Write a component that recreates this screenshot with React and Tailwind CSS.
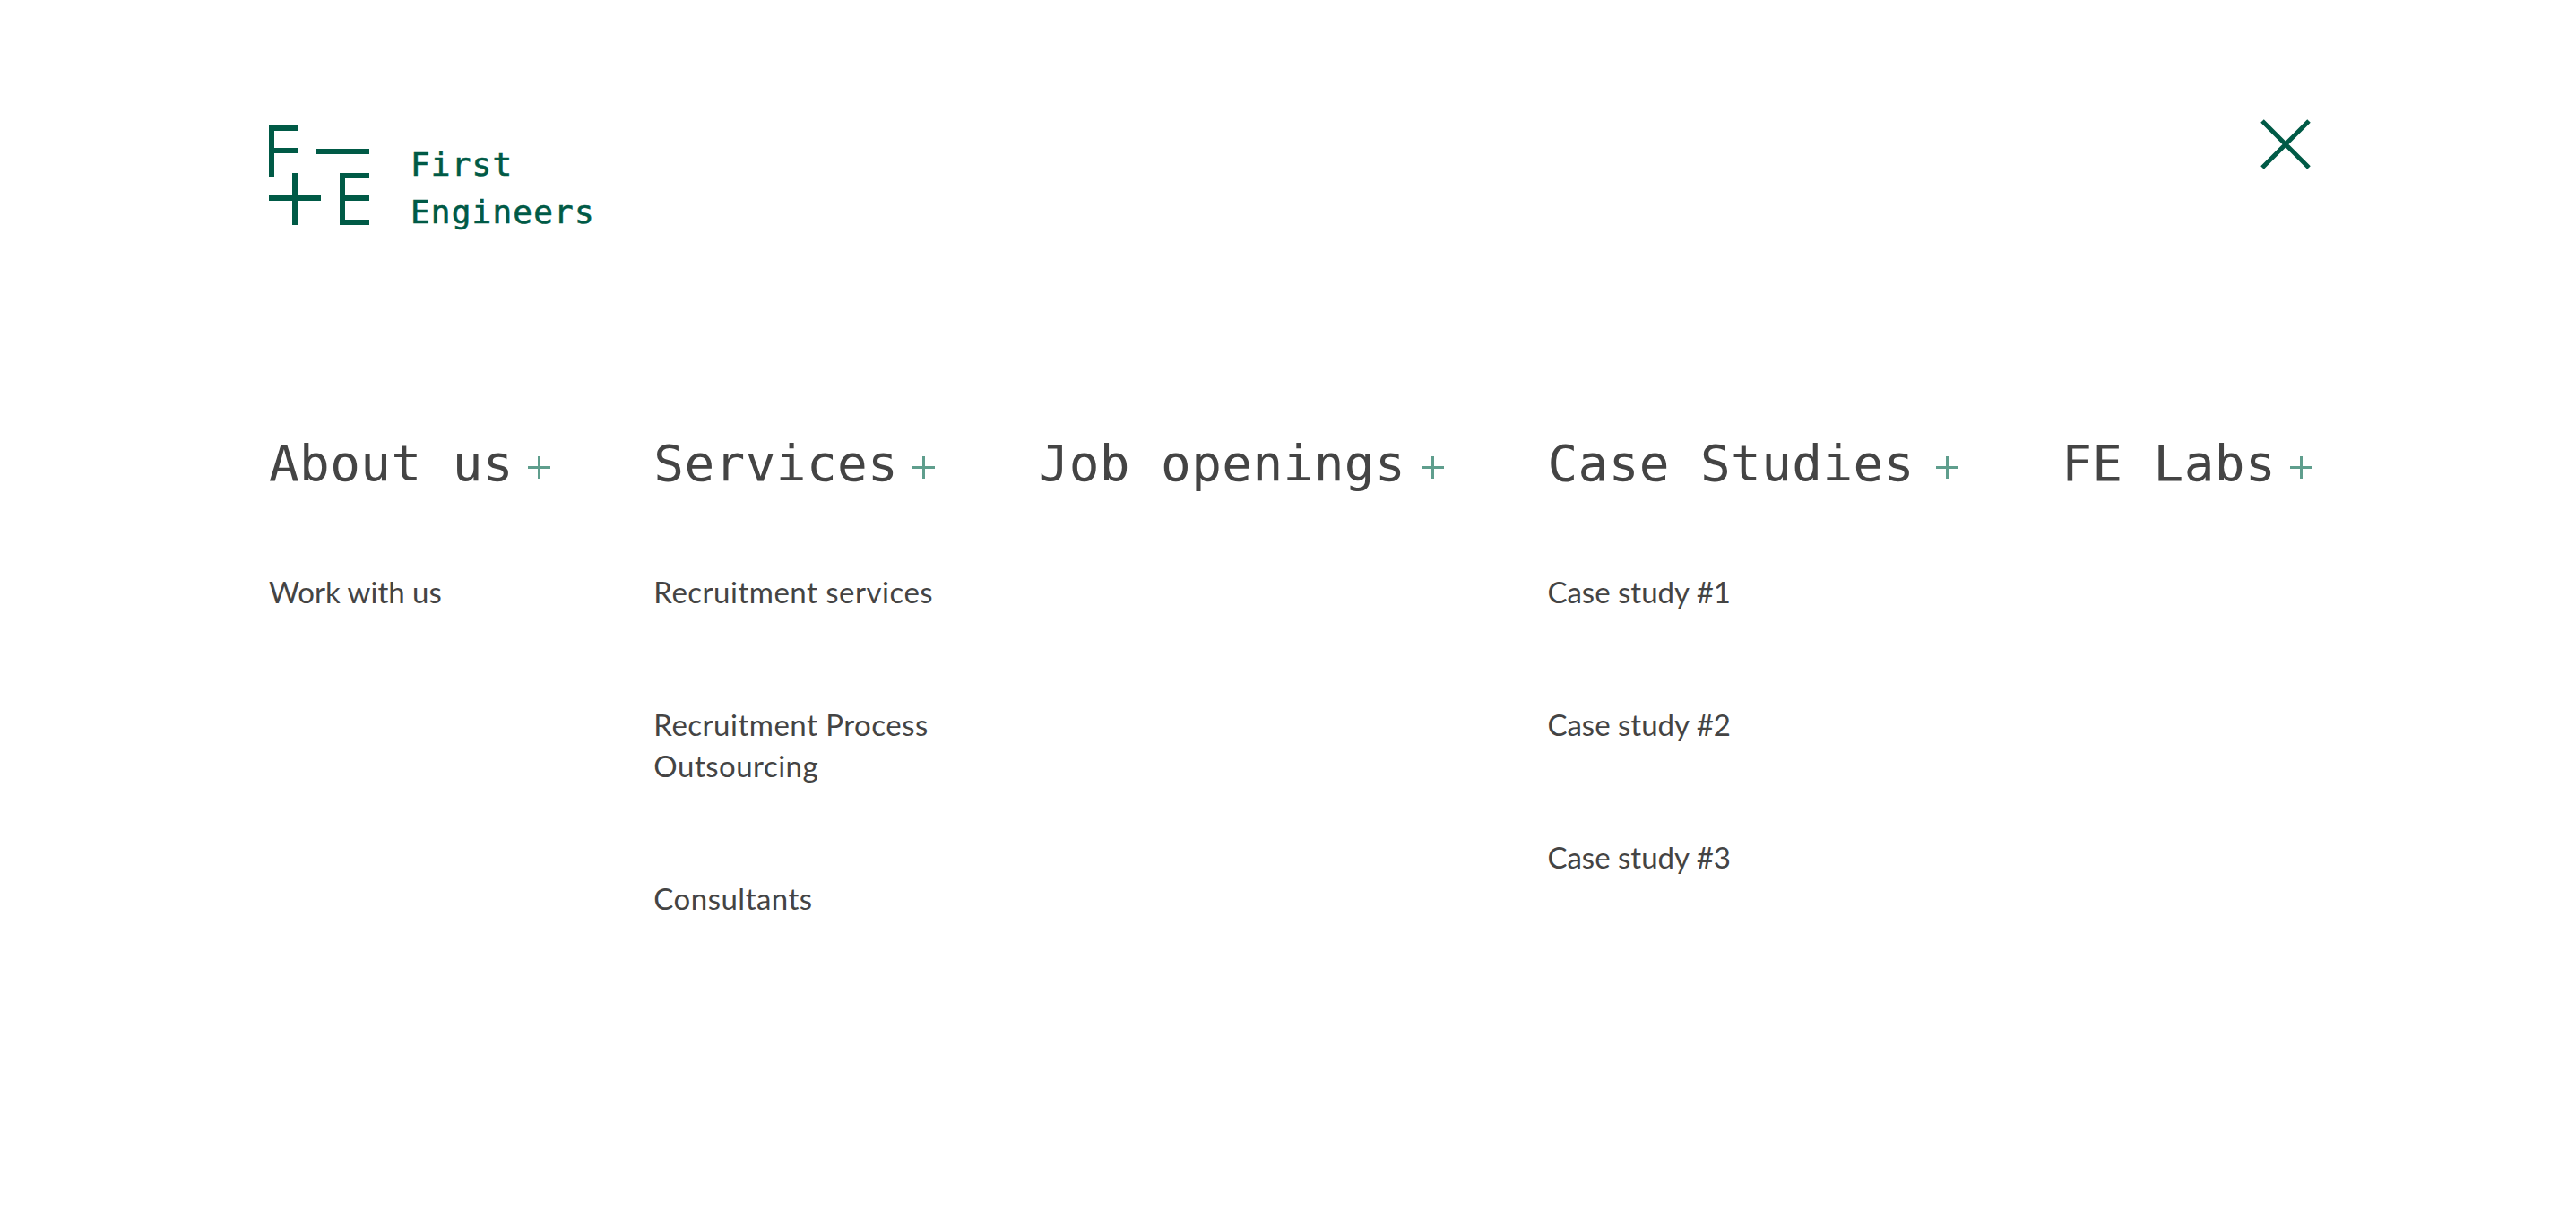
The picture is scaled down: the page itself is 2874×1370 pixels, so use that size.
const columns = [
  { title: "About us", gap: "gap-[16px]", tracking: "tracking-normal", links: ["Work with us"] },
  { title: "Services", gap: "gap-[16px]", tracking: "tracking-[0.5px]", links: ["Recruitment services", "Recruitment Process Outsourcing", "Consultants"] },
  { title: "Job openings", gap: "gap-[18px]", tracking: "tracking-normal", links: [] },
  { title: "Case Studies", gap: "gap-[24px]", tracking: "tracking-normal", links: ["Case study #1", "Case study #2", "Case study #3"] },
  { title: "FE Labs", gap: "gap-[16px]", tracking: "tracking-normal", links: [] },
];

function Logo() {
  return (
    <div className="flex items-start gap-[46px]">
      <svg width="112" height="112" viewBox="0 0 112 112" fill="none" stroke="#005a46" strokeWidth="6">
        <path d="M33 3H3V58" />
        <path d="M0 28H33" />
        <path d="M53 29H112" />
        <path d="M0 81H58" />
        <path d="M29 53V111" />
        <path d="M112 56H82V108H112" />
        <path d="M82 81H112" />
      </svg>
      <div className="pt-[17px] font-['DejaVu_Sans_Mono',monospace] text-[36px] leading-[53px] tracking-[1.2px] [-webkit-text-stroke:0.6px_#005a46] text-[#005a46]">
        <div>First</div>
        <div>Engineers</div>
      </div>
    </div>
  );
}

function Plus() {
  return (
    <svg width="25" height="25" viewBox="0 0 25 25" stroke="#5f9e8d" strokeWidth="3" className="mt-[9px] shrink-0">
      <path d="M0 12.5H25M12.5 0V25" />
    </svg>
  );
}

export default function App() {
  return (
    <div className="min-h-[1370px] bg-white pl-[300px] pr-[294px] pt-[140px]">
      <header className="flex items-start justify-between">
        <Logo />
        <svg width="58" height="58" viewBox="0 0 58 58" stroke="#005a46" strokeWidth="5" className="mt-[-8px] mr-[1px]">
          <path d="M3 3L55 55M55 3L3 55" />
        </svg>
      </header>
      <nav className="mt-[218px] flex justify-between">
        {columns.map((col) => (
          <div key={col.title} className="flex flex-col">
            <div className={`flex items-center whitespace-nowrap ${col.gap}`}>
              <h2 className="font-['DejaVu_Sans_Mono',monospace] text-[56px] leading-[72px] font-normal text-[#444444] tracking-[0.4px]">
                {col.title}
              </h2>
              <Plus />
            </div>
            <ul className="mt-[84px] flex w-0 min-w-full flex-col gap-[102px]">
              {col.links.map((link) => (
                <li key={link} className={`font-['Lato',sans-serif] text-[33px] leading-[46px] text-[#444444] ${col.tracking}`}>
                  {link}
                </li>
              ))}
            </ul>
          </div>
        ))}
      </nav>
    </div>
  );
}
